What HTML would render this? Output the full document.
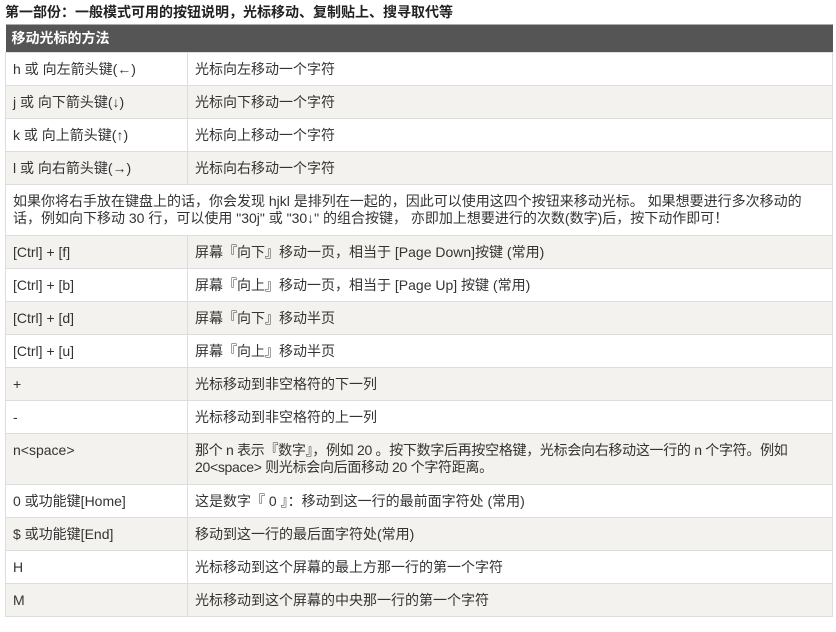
<!DOCTYPE html><html><head><meta charset="utf-8"><style>
body{margin:0;background:#fff;font-family:"Liberation Sans","Noto Sans CJK SC",sans-serif;color:#333;width:836px;height:632px;overflow:hidden}
.t{position:absolute;left:5px;top:2px;font-size:14px;font-weight:bold;color:#222}
table{position:absolute;left:5px;top:24px;width:828px;border-collapse:collapse;font-size:14px;line-height:17px}
th{background:#555;color:#fff;text-align:left;padding:0 6px;height:27px;font-size:14px;border-top:1px solid #aaa}
td{border:1px solid #ddd;padding:0 4px 0 7px;height:32px;vertical-align:middle}
td:first-child{width:170px}
tr:nth-child(odd) td{background:#f3f2ee}
tr.p td{height:50px}
.n{letter-spacing:-0.3px}
</style></head><body>
<div class="t">第一部份：一般模式可用的按钮说明，光标移动、复制贴上、搜寻取代等</div>
<table>
<tr><th colspan="2">移动光标的方法</th></tr>
<tr><td>h 或 向左箭头键(←)</td><td>光标向左移动一个字符</td></tr>
<tr><td>j 或 向下箭头键(↓)</td><td>光标向下移动一个字符</td></tr>
<tr><td>k 或 向上箭头键(↑)</td><td>光标向上移动一个字符</td></tr>
<tr><td>l 或 向右箭头键(→)</td><td>光标向右移动一个字符</td></tr>
<tr class="p"><td colspan="2" style="width:auto">如果你将右手放在键盘上的话，你会发现 hjkl 是排列在一起的，因此可以使用这四个按钮来移动光标。 如果想要进行多次移动的话，例如向下移动 30 行，可以使用 "30j" 或 "30↓" 的组合按键， 亦即加上想要进行的次数(数字)后，按下动作即可！</td></tr>
<tr><td>[Ctrl] + [f]</td><td>屏幕『向下』移动一页，相当于 [Page Down]按键 (常用)</td></tr>
<tr><td>[Ctrl] + [b]</td><td>屏幕『向上』移动一页，相当于 [Page Up] 按键 (常用)</td></tr>
<tr><td>[Ctrl] + [d]</td><td>屏幕『向下』移动半页</td></tr>
<tr><td>[Ctrl] + [u]</td><td>屏幕『向上』移动半页</td></tr>
<tr><td>+</td><td>光标移动到非空格符的下一列</td></tr>
<tr><td>-</td><td>光标移动到非空格符的上一列</td></tr>
<tr class="p"><td style="vertical-align:top;padding-top:8px;height:42px">n&lt;space&gt;</td><td class="n">那个 n 表示『数字』，例如 20 。按下数字后再按空格键，光标会向右移动这一行的 n 个字符。例如 20&lt;space&gt; 则光标会向后面移动 20 个字符距离。</td></tr>
<tr><td>0 或功能键[Home]</td><td>这是数字『 0 』：移动到这一行的最前面字符处 (常用)</td></tr>
<tr><td>$ 或功能键[End]</td><td>移动到这一行的最后面字符处(常用)</td></tr>
<tr><td>H</td><td>光标移动到这个屏幕的最上方那一行的第一个字符</td></tr>
<tr><td>M</td><td>光标移动到这个屏幕的中央那一行的第一个字符</td></tr>
</table>
</body></html>
